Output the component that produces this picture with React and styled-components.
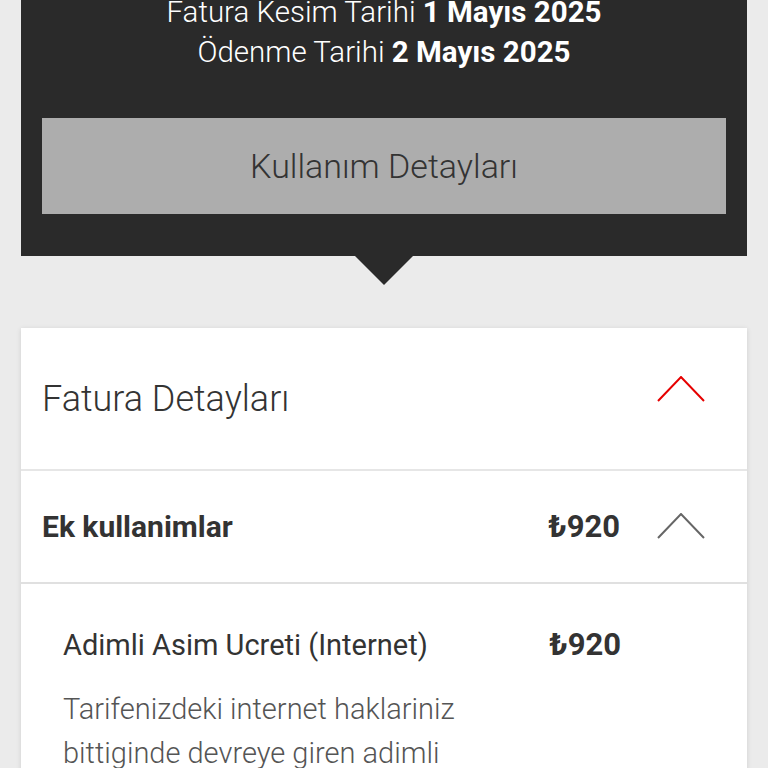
import React from 'react'
import styled, { createGlobalStyle } from 'styled-components'

const Global = createGlobalStyle`
  html, body { margin:0; padding:0; background:#ebebeb; }
  body { font-family: Roboto, "Noto Sans", "Liberation Sans", sans-serif; color:#333; overflow:hidden; }
`

const Page = styled.div`padding:0 21px; height:768px; overflow:hidden;`
const Summary = styled.section`
  position:relative; background:#2a2a2a; margin-top:-8px; padding:0 21px 42px;
  &::after {
    content:''; position:absolute; left:50%; bottom:-29px; transform:translateX(-50%);
    border-left:29px solid transparent; border-right:29px solid transparent; border-top:29px solid #2a2a2a;
  }
`
const DateLine = styled.div`
  text-align:center; color:#fff; font-size:29.5px; font-weight:300; line-height:40px;
  b { font-weight:700; }
`
const DetailsButton = styled.button`
  display:block; width:100%; height:96px; margin-top:46px; border:0; background:#adadad;
  color:#333; font-family:inherit; font-size:34px; font-weight:300; cursor:pointer;
`
const Card = styled.section`
  background:#fff; margin-top:72px; box-shadow:0 1px 5px rgba(0,0,0,0.12);
`
const Header = styled.div`
  display:flex; align-items:center; justify-content:space-between; height:143px;
  padding:0 42px 0 21px; border-bottom:2px solid #e6e6e6; box-sizing:border-box;
`
const HeaderTitle = styled.h2`margin:0; font-size:36px; font-weight:300; color:#333;`
const Group = styled.div`
  display:flex; align-items:center; height:113px; padding:0 42px 0 21px;
  border-bottom:2px solid #e0e0e0; box-sizing:border-box;
`
const GroupTitle = styled.div`flex:1; font-size:30px; font-weight:700; color:#333;`
const Price = styled.div`font-size:31px; font-weight:700; color:#333;`
const Chevron = styled.svg`
  flex:none; margin-left:${p => p.$gap || 0}px;
  margin-bottom:${p => (p.$lift || 0) * 2}px;
`
const Item = styled.div`padding:42px 0 0 42px;`
const ItemRow = styled.div`display:flex; align-items:center; padding-right:126px;`
const ItemName = styled.div`flex:1; font-size:29px; font-weight:400; color:#333;`
const ItemText = styled.p`margin:24px 0 0; width:420px; font-size:29px; font-weight:300; line-height:44px; color:#555;`

function Caret({ color, gap, lift }) {
  return (
    <Chevron $gap={gap} $lift={lift} width="48" height="28" viewBox="0 0 48 28">
      <polyline points="1,25 24,1 47,25" fill="none" stroke={color} strokeWidth="2" />
    </Chevron>
  )
}

export default function App() {
  return (
    <Page>
      <Global />
      <Summary>
        <DateLine>Fatura Kesim Tarihi <b>1 Mayıs 2025</b></DateLine>
        <DateLine>Ödenme Tarihi <b>2 Mayıs 2025</b></DateLine>
        <DetailsButton>Kullanım Detayları</DetailsButton>
      </Summary>
      <Card>
        <Header>
          <HeaderTitle>Fatura Detayları</HeaderTitle>
          <Caret color="#e60000" lift={9} />
        </Header>
        <Group>
          <GroupTitle>Ek kullanimlar</GroupTitle>
          <Price>₺920</Price>
          <Caret color="#666" gap={37} />
        </Group>
        <Item>
          <ItemRow>
            <ItemName>Adimli Asim Ucreti (Internet)</ItemName>
            <Price>₺920</Price>
          </ItemRow>
          <ItemText>Tarifenizdeki internet haklariniz bittiginde devreye giren adimli asim ucreti</ItemText>
        </Item>
      </Card>
    </Page>
  )
}
